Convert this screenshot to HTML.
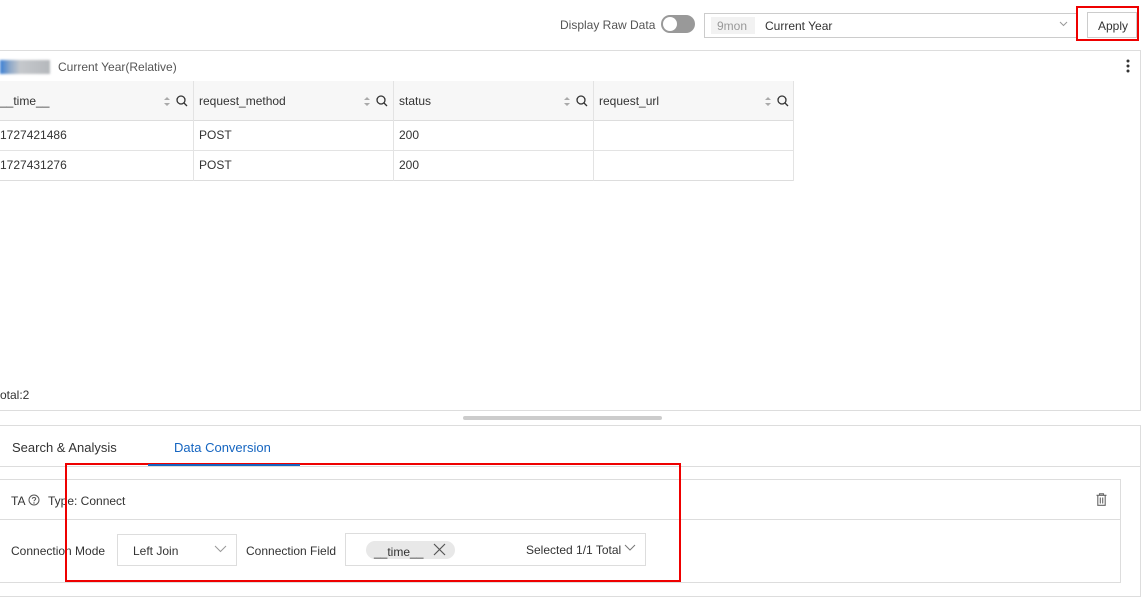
<!DOCTYPE html><html><head><style>
body{margin:0;width:1145px;height:587px;background:#fff;font-family:"Liberation Sans",sans-serif;font-size:12px;color:#333;position:relative;overflow:hidden}
.a{position:absolute}
.t{position:absolute;white-space:nowrap}
.hd{background:#f7f7f7}
svg{position:absolute}
</style></head><body>
<div class="t" style="left:560px;top:18px;color:#555">Display Raw Data</div>
<div class="a" style="left:661px;top:15px;width:34px;height:18px;border-radius:9px;background:#999"><div class="a" style="left:2px;top:2px;width:14px;height:14px;border-radius:7px;background:#fff"></div></div>
<div class="a" style="left:704px;top:13px;width:371px;height:23px;border:1px solid #ccc"></div>
<div class="a" style="left:711px;top:17px;width:44px;height:17px;background:#f2f2f2"></div>
<div class="t" style="left:717px;top:19px;color:#999">9mon</div>
<div class="t" style="left:765px;top:19px;color:#333">Current Year</div>
<svg style="left:1059px;top:21px" width="9" height="6"><path d="M1 1L4.5 4.5L8 1" fill="none" stroke="#999" stroke-width="1"/></svg>
<div class="a" style="left:1087px;top:12px;width:48px;height:24px;border:1px solid #ccc"></div>
<div class="t" style="left:1098px;top:19px">Apply</div>
<div class="a" style="left:1076px;top:6px;width:59px;height:31px;border:2px solid #e00"></div>

<div class="a" style="left:-1px;top:50px;width:1140px;height:359px;border:1px solid #ddd"></div>
<div class="a" style="left:0;top:60px;width:50px;height:14px;background:linear-gradient(90deg,#3a7fd5 0,#8fa9c9 20%,#c5c8cc 40%,#b5b8bc 100%);filter:blur(1px)"></div>
<div class="t" style="left:58px;top:60px;color:#555">Current Year(Relative)</div>
<svg style="left:1126px;top:59px" width="4" height="14"><circle cx="2" cy="2" r="1.5" fill="#333"/><circle cx="2" cy="7" r="1.5" fill="#333"/><circle cx="2" cy="12" r="1.5" fill="#333"/></svg>
<div class="a hd" style="left:0;top:81px;width:793px;height:39px;border-bottom:1px solid #ddd"></div>
<div class="a" style="left:0;top:150px;width:793px;height:1px;background:#e3e3e3"></div>
<div class="a" style="left:0;top:180px;width:793px;height:1px;background:#ddd"></div>
<div class="a" style="left:193px;top:81px;width:1px;height:100px;background:#e3e3e3"></div>
<div class="a" style="left:393px;top:81px;width:1px;height:100px;background:#e3e3e3"></div>
<div class="a" style="left:593px;top:81px;width:1px;height:100px;background:#e3e3e3"></div>
<div class="a" style="left:793px;top:81px;width:1px;height:100px;background:#e3e3e3"></div>
<div class="t" style="left:0;top:94px">__time__</div>
<div class="t" style="left:199px;top:94px">request_method</div>
<div class="t" style="left:399px;top:94px">status</div>
<div class="t" style="left:599px;top:94px">request_url</div>
<svg style="left:163px;top:96px" width="8" height="11"><path d="M1 4L4 1L7 4ZM1 7L4 10L7 7Z" fill="#aaa"/></svg>
<svg style="left:176px;top:95px" width="12" height="12"><circle cx="5" cy="5" r="4" fill="none" stroke="#333" stroke-width="1.3"/><path d="M8 8L11 11" stroke="#333" stroke-width="1.3"/></svg>
<svg style="left:363px;top:96px" width="8" height="11"><path d="M1 4L4 1L7 4ZM1 7L4 10L7 7Z" fill="#aaa"/></svg>
<svg style="left:376px;top:95px" width="12" height="12"><circle cx="5" cy="5" r="4" fill="none" stroke="#333" stroke-width="1.3"/><path d="M8 8L11 11" stroke="#333" stroke-width="1.3"/></svg>
<svg style="left:563px;top:96px" width="8" height="11"><path d="M1 4L4 1L7 4ZM1 7L4 10L7 7Z" fill="#aaa"/></svg>
<svg style="left:576px;top:95px" width="12" height="12"><circle cx="5" cy="5" r="4" fill="none" stroke="#333" stroke-width="1.3"/><path d="M8 8L11 11" stroke="#333" stroke-width="1.3"/></svg>
<svg style="left:764px;top:96px" width="8" height="11"><path d="M1 4L4 1L7 4ZM1 7L4 10L7 7Z" fill="#aaa"/></svg>
<svg style="left:777px;top:95px" width="12" height="12"><circle cx="5" cy="5" r="4" fill="none" stroke="#333" stroke-width="1.3"/><path d="M8 8L11 11" stroke="#333" stroke-width="1.3"/></svg>
<div class="t" style="left:0;top:128px">1727421486</div><div class="t" style="left:199px;top:128px">POST</div><div class="t" style="left:399px;top:128px">200</div>
<div class="t" style="left:0;top:158px">1727431276</div><div class="t" style="left:199px;top:158px">POST</div><div class="t" style="left:399px;top:158px">200</div>
<div class="t" style="left:0;top:388px">otal:2</div>
<div class="a" style="left:463px;top:416px;width:199px;height:4px;border-radius:2px;background:#ccc"></div>

<div class="a" style="left:-1px;top:425px;width:1140px;height:170px;border:1px solid #ddd"></div>
<div class="t" style="left:12px;top:440px;font-size:13px">Search &amp; Analysis</div>
<div class="t" style="left:174px;top:440px;font-size:13px;color:#1565c0">Data Conversion</div>
<div class="a" style="left:0;top:466px;width:1140px;height:1px;background:#ddd"></div>
<div class="a" style="left:0;top:479px;width:1120px;height:102px;border:1px solid #ddd;border-left:none"></div>
<div class="a" style="left:0;top:519px;width:1120px;height:1px;background:#ddd"></div>
<div class="t" style="left:11px;top:494px">TA</div>
<svg style="left:28px;top:494px" width="12" height="12"><circle cx="6" cy="6" r="5" fill="none" stroke="#555"/><path d="M4.3 4.8C4.3 3 7.7 3 7.7 4.8C7.7 6 6 6 6 7.3" fill="none" stroke="#555"/><circle cx="6" cy="9" r=".7" fill="#555"/></svg>
<div class="t" style="left:48px;top:494px">Type: Connect</div>
<svg style="left:1096px;top:493px" width="11" height="13"><path d="M3.5 2V0.8H7.5V2M0.5 2.3H10.5M1.8 2.5V12.3H9.2V2.5M4.3 4.5V10.5M6.7 4.5V10.5" fill="none" stroke="#666" stroke-width="1.1"/></svg>
<div class="t" style="left:11px;top:544px">Connection Mode</div>
<div class="a" style="left:117px;top:534px;width:118px;height:30px;border:1px solid #ddd"></div>
<div class="t" style="left:133px;top:544px">Left Join</div>
<svg style="left:214px;top:545px" width="13" height="8"><path d="M1 1L6.5 6.5L12 1" fill="none" stroke="#999"/></svg>
<div class="t" style="left:246px;top:544px">Connection Field</div>
<div class="a" style="left:345px;top:533px;width:299px;height:31px;border:1px solid #ddd"></div>
<div class="a" style="left:366px;top:541px;width:89px;height:18px;border-radius:9px;background:#e8e8e8"></div>
<div class="t" style="left:374px;top:545px">__time__</div>
<svg style="left:433px;top:543px" width="13" height="13"><path d="M1 1L12 12M12 1L1 12" stroke="#555" stroke-width="1.2"/></svg>
<div class="t" style="left:526px;top:543px">Selected 1/1 Total</div>
<svg style="left:624px;top:544px" width="12" height="8"><path d="M1 1L6 6L11 1" fill="none" stroke="#777"/></svg>
<div class="a" style="left:65px;top:463px;width:612px;height:115px;border:2px solid #e00"></div>
<div class="a" style="left:148px;top:464px;width:152px;height:2px;background:#1565c0"></div>
</body></html>
